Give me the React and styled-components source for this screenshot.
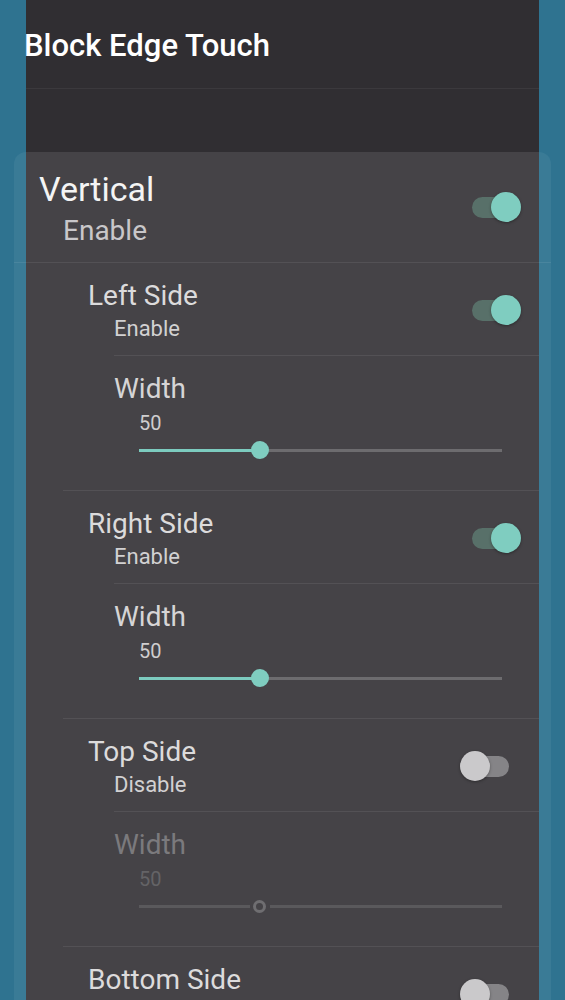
import React from "react";
import styled, { createGlobalStyle } from "styled-components";

let GlobalStyle = createGlobalStyle`
  body {
    margin: 0;
    background: #2f7390;
    overflow: hidden;
  }
`;

let Page = styled.div`
  min-height: 1000px;
  background: #2f7390;
  font-family: Roboto, "Noto Sans", sans-serif;
`;

let AppBar = styled.header`
  margin: 0 26px;
  height: 152px;
  background: #302e32;
`;

let TitleBar = styled.div`
  padding: 28px 0 24px;
  border-bottom: 1px solid #3b393d;
`;

let Title = styled.h1`
  margin: 0 0 0 -2px;
  font-size: 31px;
  line-height: 36px;
  font-weight: 500;
  color: #ffffff;
`;

let Panel = styled.section`
  margin: 0 14px;
  padding: 0 12px;
  min-height: 848px;
  background: #3a7b96;
  border-radius: 12px 12px 0 0;
`;

let Column = styled.div`
  min-height: 848px;
  background: #454347;
`;

let Row = styled.div`
  display: flex;
  align-items: center;
  justify-content: space-between;
  padding: ${(p) => (p.$main ? "17px 0 15px" : "17px 0 13px")};
`;

let TextBlock = styled.div`
  display: flex;
  flex-direction: column;
`;

let RowTitle = styled.div`
  padding-left: ${(p) => (p.$main ? 13 : 62)}px;
  font-size: ${(p) => (p.$main ? 34 : 28)}px;
  line-height: ${(p) => (p.$main ? 40 : 32)}px;
  color: ${(p) => (p.$main ? "#f4f4f4" : "#dcdbdc")};
`;

let Summary = styled.div`
  margin-top: ${(p) => (p.$main ? 6 : 4)}px;
  padding-left: ${(p) => (p.$main ? 37 : 88)}px;
  font-size: ${(p) => (p.$main ? 28 : 22)}px;
  line-height: ${(p) => (p.$main ? 32 : 26)}px;
  color: ${(p) => (p.$main ? "#c9c7ca" : "#d2d1d2")};
`;

let Divider = styled.hr`
  margin: 0 ${(p) => (p.$full ? "-12px" : "0")} 0
    ${(p) => (p.$full ? "-12px" : p.$inset + "px")};
  border: 0;
  height: 1px;
  background: rgba(255, 255, 255, 0.08);
`;

let Switch = styled.div`
  position: relative;
  flex: none;
  width: 62px;
  height: 32px;
  margin-right: 17px;
`;

let Track = styled.div`
  position: absolute;
  left: 12px;
  top: 5px;
  width: 37px;
  height: 21px;
  border-radius: 11px;
  background: ${(p) => (p.$on ? "#587069" : "#858487")};
`;

let Knob = styled.div`
  position: absolute;
  top: 0;
  left: ${(p) => (p.$on ? 31 : 0)}px;
  width: 30px;
  height: 30px;
  border-radius: 50%;
  background: ${(p) => (p.$on ? "#7fcdc0" : "#cac9cb")};
  box-shadow: 0 1px 3px rgba(0, 0, 0, 0.35);
`;

let SliderRow = styled.div`
  padding: 17px 0 25px;
`;

let SliderLabel = styled.div`
  padding-left: 88px;
  font-size: 28px;
  line-height: 32px;
  color: ${(p) => (p.$disabled ? "#7b7a7d" : "#d6d5d6")};
`;

let SliderValue = styled.div`
  margin-top: 6px;
  padding-left: 113px;
  font-size: 20px;
  line-height: 24px;
  color: ${(p) => (p.$disabled ? "#646366" : "#cfcecf")};
`;

let SliderTrack = styled.div`
  display: flex;
  align-items: center;
  height: 30px;
  margin: 0 37px 0 113px;
`;

let Bar = styled.div`
  height: 3px;
  flex: ${(p) => (p.$rest ? "1" : "none")};
  background: ${(p) =>
    p.$disabled ? "#5a595c" : p.$rest ? "#6d6c6f" : "#7ccbbf"};
`;

let SliderThumb = styled.div`
  flex: none;
  box-sizing: border-box;
  border-radius: 50%;
  width: ${(p) => (p.$disabled ? 13 : 18)}px;
  height: ${(p) => (p.$disabled ? 13 : 18)}px;
  margin: ${(p) => (p.$disabled ? "0 4px 0 3px" : "0 -9px")};
  background: ${(p) => (p.$disabled ? "transparent" : "#7fcdc0")};
  border: ${(p) => (p.$disabled ? "3px solid #6f6e71" : "none")};
  position: relative;
`;

let Toggle = ({ on }) => (
  <Switch>
    <Track $on={on} />
    <Knob $on={on} />
  </Switch>
);

let Slider = ({ value, disabled }) => {
  let pct = value / 150;
  let offset = disabled ? 10 : 0;
  return (
    <SliderTrack>
      <Bar
        $disabled={disabled}
        style={{ width: `calc(${pct * 100}% - ${offset}px)` }}
      />
      <SliderThumb $disabled={disabled} />
      <Bar $rest $disabled={disabled} />
    </SliderTrack>
  );
};

let sides = [
  { name: "Left Side", on: true, width: 50 },
  { name: "Right Side", on: true, width: 50 },
  { name: "Top Side", on: false, width: 50 },
  { name: "Bottom Side", on: false, width: 50 },
];

let App = () => {
  return (
    <Page>
      <GlobalStyle />
      <AppBar>
        <TitleBar>
          <Title>Block Edge Touch</Title>
        </TitleBar>
      </AppBar>
      <Panel>
        <Column>
          <Row $main>
            <TextBlock>
              <RowTitle $main>Vertical</RowTitle>
              <Summary $main>Enable</Summary>
            </TextBlock>
            <Toggle on />
          </Row>
          <Divider $full />
          {sides.map((side) => (
            <React.Fragment key={side.name}>
              <Row>
                <TextBlock>
                  <RowTitle>{side.name}</RowTitle>
                  <Summary>{side.on ? "Enable" : "Disable"}</Summary>
                </TextBlock>
                <Toggle on={side.on} />
              </Row>
              <Divider $inset={88} />
              <SliderRow>
                <SliderLabel $disabled={!side.on}>Width</SliderLabel>
                <SliderValue $disabled={!side.on}>{side.width}</SliderValue>
                <Slider value={side.width} disabled={!side.on} />
              </SliderRow>
              <Divider $inset={37} />
            </React.Fragment>
          ))}
        </Column>
      </Panel>
    </Page>
  );
};

export default App;
